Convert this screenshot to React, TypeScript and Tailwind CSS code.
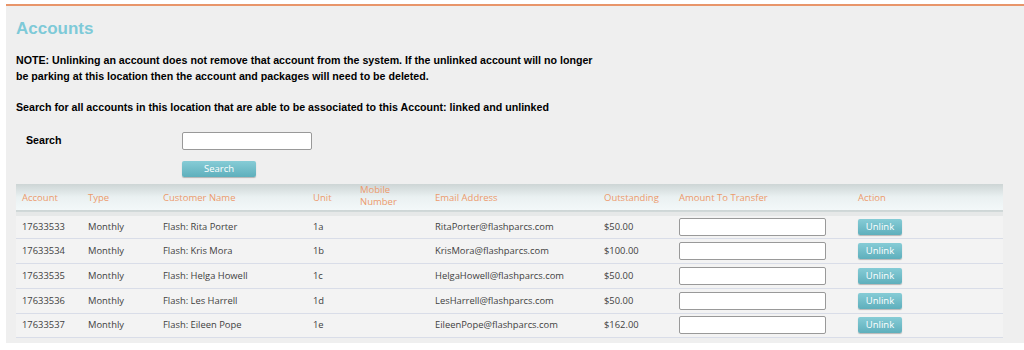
const rows = [
  { id: "17633533", name: "Flash: Rita Porter", unit: "1a", email: "RitaPorter@flashparcs.com", due: "$50.00" },
  { id: "17633534", name: "Flash: Kris Mora", unit: "1b", email: "KrisMora@flashparcs.com", due: "$100.00" },
  { id: "17633535", name: "Flash: Helga Howell", unit: "1c", email: "HelgaHowell@flashparcs.com", due: "$50.00" },
  { id: "17633536", name: "Flash: Les Harrell", unit: "1d", email: "LesHarrell@flashparcs.com", due: "$50.00" },
  { id: "17633537", name: "Flash: Eileen Pope", unit: "1e", email: "EileenPope@flashparcs.com", due: "$162.00" },
];

const sans = "font-['Liberation_Sans',Arial,sans-serif]";
const ui = "font-['Open_Sans','Noto_Sans',sans-serif]";

function TealButton({ label, className }: { label: string; className: string }) {
  return (
    <button
      className={`${ui} ${className} rounded-[2px] bg-gradient-to-b from-[#86ccd6] to-[#5eafbc] text-[9.5px] text-white shadow-[0_1px_1px_rgba(0,0,0,0.25)]`}
    >
      {label}
    </button>
  );
}

export default function App() {
  return (
    <div className="h-[350px] bg-white pl-[6px] pt-[4px]">
      <div className={`${sans} h-[339px] border-t-2 border-[#e8956a] bg-[#efefef] pl-[10px] pr-[21px]`}>
        <h1 className="pt-[12px] text-[17px] font-bold leading-[22px] text-[#7ecad8]">Accounts</h1>

        <p className="mt-[12px] w-[586px] text-[10.65px] font-bold leading-[16px] text-black">
          NOTE: Unlinking an account does not remove that account from the system. If the unlinked account will no longer be
          parking at this location then the account and packages will need to be deleted.
        </p>
        <p className="mt-[15px] text-[10.65px] font-bold leading-[16px] text-black">
          Search for all accounts in this location that are able to be associated to this Account: linked and unlinked
        </p>

        <div className="mt-[17px] flex items-center">
          <span className="w-[166px] pl-[10px] text-[10.65px] font-bold text-black">Search</span>
          <input className="h-[18px] w-[130px] rounded-[2px] border border-[#999] bg-white" />
        </div>
        <div className="mt-[5px] pl-[166px]">
          <TealButton label="Search" className="h-[16px] w-[74px]" />
        </div>

        <table className={`${ui} mt-[5px] w-[987px] table-fixed border-collapse text-[9.4px] text-[#3f3f3f]`}>
          <colgroup>
            <col className="w-[66px]" />
            <col className="w-[75px]" />
            <col className="w-[150px]" />
            <col className="w-[47px]" />
            <col className="w-[75px]" />
            <col className="w-[169px]" />
            <col className="w-[75px]" />
            <col className="w-[179px]" />
            <col />
          </colgroup>
          <thead>
            <tr className="h-[30px] border-b-[4px] border-[#e6e8e8] bg-gradient-to-b from-[#cdd5d5] via-[#eaf1f2] to-[#f3f8f9] text-left text-[#ec9a6c]">
              {["Account", "Type", "Customer Name", "Unit", "Mobile Number", "Email Address", "Outstanding", "Amount To Transfer", "Action"].map(
                (h) => (
                  <th key={h} className="px-[6px] text-[9.5px] font-normal leading-[12px]">
                    {h === "Mobile Number" ? (
                      <span className="relative -top-[2px] block w-[40px]">Mobile Number</span>
                    ) : (
                      h
                    )}
                  </th>
                )
              )}
            </tr>
          </thead>
          <tbody className="bg-[#f3f3f3]">
            {rows.map((r) => (
              <tr key={r.id} className="h-[24.75px] border-b border-[#d9dde8]">
                <td className="px-[6px]">{r.id}</td>
                <td className="px-[6px]">Monthly</td>
                <td className="px-[6px]">{r.name}</td>
                <td className="px-[6px]">{r.unit}</td>
                <td className="px-[6px]"></td>
                <td className="px-[6px]">{r.email}</td>
                <td className="px-[6px]">{r.due}</td>
                <td className="px-[6px]">
                  <input className="block h-[18px] w-[147px] rounded-[2px] border border-[#999] bg-white" />
                </td>
                <td className="px-[6px]">
                  <TealButton label="Unlink" className="block h-[16px] w-[44px]" />
                </td>
              </tr>
            ))}
          </tbody>
        </table>
      </div>
    </div>
  );
}
